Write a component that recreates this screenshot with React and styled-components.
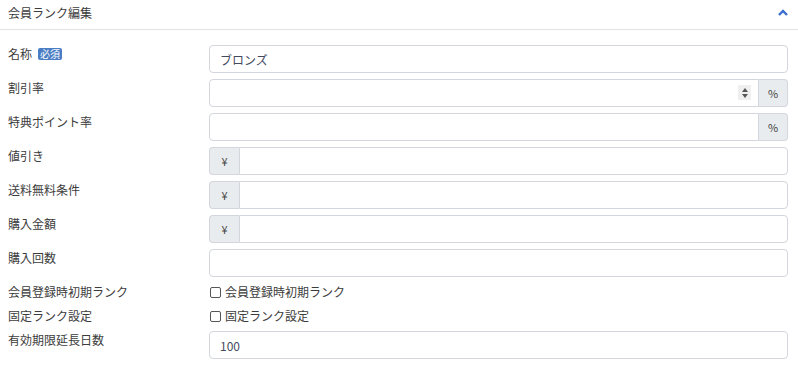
import React from "react";
import styled, { createGlobalStyle } from "styled-components";

const GlobalStyle = createGlobalStyle`
    body {
        margin: 0;
        background: #ffffff;
        font-family: "Noto Sans CJK JP", "Noto Sans", sans-serif;
        font-size: 12px;
        color: #3c3c3c;
    }
`;

const Card = styled.div`
    width: 798px;
    background: #ffffff;
`;
const Header = styled.div`
    height: 30px;
    padding: 0 10px 0 8px;
    box-sizing: border-box;
    display: flex;
    align-items: center;
    justify-content: space-between;
    padding-bottom: 4px;
    border-bottom: 1px solid #e3e3e3;
`;
const Title = styled.div`
    font-size: 12px;
    line-height: 16px;
`;
const Body = styled.div`
    padding: 15px 10px 0 8px;
`;
const Row = styled.div`
    display: grid;
    grid-template-columns: 201px 1fr;
    margin-bottom: 6px;
    min-height: ${(props) => (props.compact ? "18px" : "28px")};
`;
const Label = styled.div`
    line-height: 17px;
    display: flex;
    align-items: flex-start;
`;
const Badge = styled.span`
    display: inline-block;
    margin: 3px 0 0 6px;
    padding: 0 2px;
    height: 12px;
    line-height: 12px;
    font-size: 10px;
    color: #ffffff;
    background: #4a7dc4;
    border-radius: 2px;
`;
const Group = styled.div`
    display: flex;
    height: 28px;
    position: relative;
`;
const Input = styled.input`
    flex: 1;
    min-width: 0;
    height: 28px;
    box-sizing: border-box;
    border: 1px solid #d3d6dc;
    border-radius: ${(props) =>
        props.left ? "0 4px 4px 0" : props.right ? "4px 0 0 4px" : "4px"};
    padding: 0 10px;
    font-family: inherit;
    font-size: 12px;
    color: #444a5e;
    background: #ffffff;
    outline: none;
`;
const Addon = styled.span`
    width: ${(props) => props.width || "30px"};
    flex: none;
    height: 28px;
    box-sizing: border-box;
    display: flex;
    align-items: center;
    justify-content: center;
    background: #e9ecef;
    border: 1px solid #d3d6dc;
    border-radius: ${(props) => (props.side === "left" ? "4px 0 0 4px" : "0 4px 4px 0")};
    ${(props) => (props.side === "left" ? "border-right: none;" : "border-left: none;")}
    font-size: 11px;
    color: #444;
`;
const Spinner = styled.span`
    position: absolute;
    right: 37px;
    top: 6px;
    width: 13px;
    height: 15px;
    background: #efefef;
    display: flex;
    flex-direction: column;
    align-items: center;
    justify-content: center;
    gap: 2px;
`;
const Tri = styled.span`
    width: 0;
    height: 0;
    border-left: 3px solid transparent;
    border-right: 3px solid transparent;
    ${(props) =>
        props.down ? "border-top: 4px solid #555;" : "border-bottom: 4px solid #555;"}
`;
const Check = styled.label`
    display: flex;
    align-items: center;
    line-height: 18px;
    height: 18px;
`;
const Box = styled.span`
    width: 11px;
    height: 11px;
    box-sizing: border-box;
    border: 1px solid #555;
    border-radius: 2px;
    margin: 0 4px 0 1px;
    background: #ffffff;
`;

const Chevron = () => (
    <svg width="10" height="7" viewBox="0 0 10 7">
        <path d="M1 6 L5 2 L9 6" fill="none" stroke="#3a6fd0" strokeWidth="2.4" />
    </svg>
);

const yenRows = ["値引き", "送料無料条件", "購入金額"];

const App = () => {
    return (
        <Card>
            <GlobalStyle />
            <Header>
                <Title>会員ランク編集</Title>
                <Chevron />
            </Header>
            <Body>
                <Row>
                    <Label>
                        名称<Badge>必須</Badge>
                    </Label>
                    <Group>
                        <Input defaultValue="ブロンズ" />
                    </Group>
                </Row>
                <Row>
                    <Label>割引率</Label>
                    <Group>
                        <Input right />
                        <Spinner>
                            <Tri />
                            <Tri down />
                        </Spinner>
                        <Addon side="right" width="29px">%</Addon>
                    </Group>
                </Row>
                <Row>
                    <Label>特典ポイント率</Label>
                    <Group>
                        <Input right />
                        <Addon side="right" width="29px">%</Addon>
                    </Group>
                </Row>
                {yenRows.map((label) => (
                    <Row key={label}>
                        <Label>{label}</Label>
                        <Group>
                            <Addon side="left">¥</Addon>
                            <Input left />
                        </Group>
                    </Row>
                ))}
                <Row>
                    <Label>購入回数</Label>
                    <Group>
                        <Input />
                    </Group>
                </Row>
                <Row compact>
                    <Label>会員登録時初期ランク</Label>
                    <Check>
                        <Box />
                        会員登録時初期ランク
                    </Check>
                </Row>
                <Row compact>
                    <Label>固定ランク設定</Label>
                    <Check>
                        <Box />
                        固定ランク設定
                    </Check>
                </Row>
                <Row>
                    <Label>有効期限延長日数</Label>
                    <Group>
                        <Input defaultValue="100" />
                    </Group>
                </Row>
            </Body>
        </Card>
    );
};

export default App;
